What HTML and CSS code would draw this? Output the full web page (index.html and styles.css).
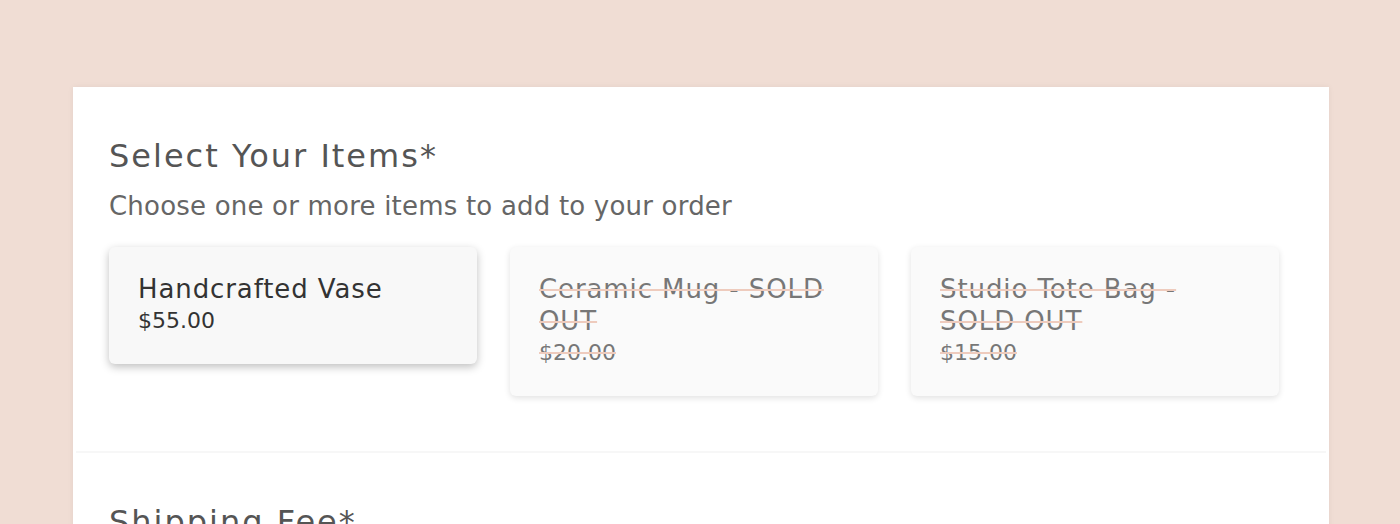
FILE: index.html
```html
<!DOCTYPE html>
<html lang="en">
<head>
    <meta charset="UTF-8" />
    <meta name="viewport" content="width=device-width, initial-scale=1" />
    <title>Order Form</title>
    <link rel="stylesheet" href="styles.css">
</head>
<body>
    <div class="form-card">
        <div class="section">
            <h2>Select Your Items*</h2>
            <p class="hint">Choose one or more items to add to your order</p>
            <div class="items">
                <div class="item selected">
                    <div class="item-name">Handcrafted Vase</div>
                    <div class="item-price">$55.00</div>
                </div>
                <div class="item sold-out">
                    <div class="item-name">Ceramic Mug - SOLD OUT</div>
                    <div class="item-price">$20.00</div>
                </div>
                <div class="item sold-out">
                    <div class="item-name">Studio Tote Bag - SOLD OUT</div>
                    <div class="item-price">$15.00</div>
                </div>
            </div>
        </div>
        <div class="section">
            <h2>Shipping Fee*</h2>
        </div>
    </div>
</body>
</html>
```

FILE: styles.css
```css
body {
    margin: 0;
    padding: 87px 71px 0 73px;
    background-color: #f0ddd4;
    font-family: "DejaVu Sans", sans-serif;
    height: 524px;
    box-sizing: border-box;
    overflow: hidden;
}
.form-card {
    background: white;
    box-shadow: 0 0 6px rgba(0,0,0,0.06);
}
.section {
    padding: 50px 33px 55px;
    border-bottom: 2px solid #f7f7f7;
    margin: 0 3px;
}
.section h2 {
    margin: 0 0 16px;
    font-size: 32px;
    font-weight: 400;
    line-height: 38px;
    letter-spacing: 2px;
    color: #555;
}
.hint {
    margin: 0 0 26px;
    font-size: 26px;
    line-height: 30px;
    letter-spacing: 0.2px;
    color: #666;
}
.items {
    display: grid;
    grid-template-columns: repeat(3, 368px);
    gap: 33px;
    align-items: start;
}
.item {
    background: #f8f8f8;
    border-radius: 6px;
    padding: 26px 29px 27px;
    box-shadow: 0 2px 6px rgba(0,0,0,0.12);
}
.item.selected {
    box-shadow: 0 3px 8px rgba(0,0,0,0.25);
}
.item-name {
    font-size: 26px;
    line-height: 32px;
    letter-spacing: 0.9px;
    color: #333;
}
.item-price {
    font-size: 22px;
    line-height: 32px;
    color: #333;
}
.sold-out {
    background: #fafafa;
}
.sold-out .item-name,
.sold-out .item-price {
    color: #777;
    text-decoration: line-through;
    text-decoration-color: #eecbbd;
    text-decoration-thickness: 2px;
}
```
